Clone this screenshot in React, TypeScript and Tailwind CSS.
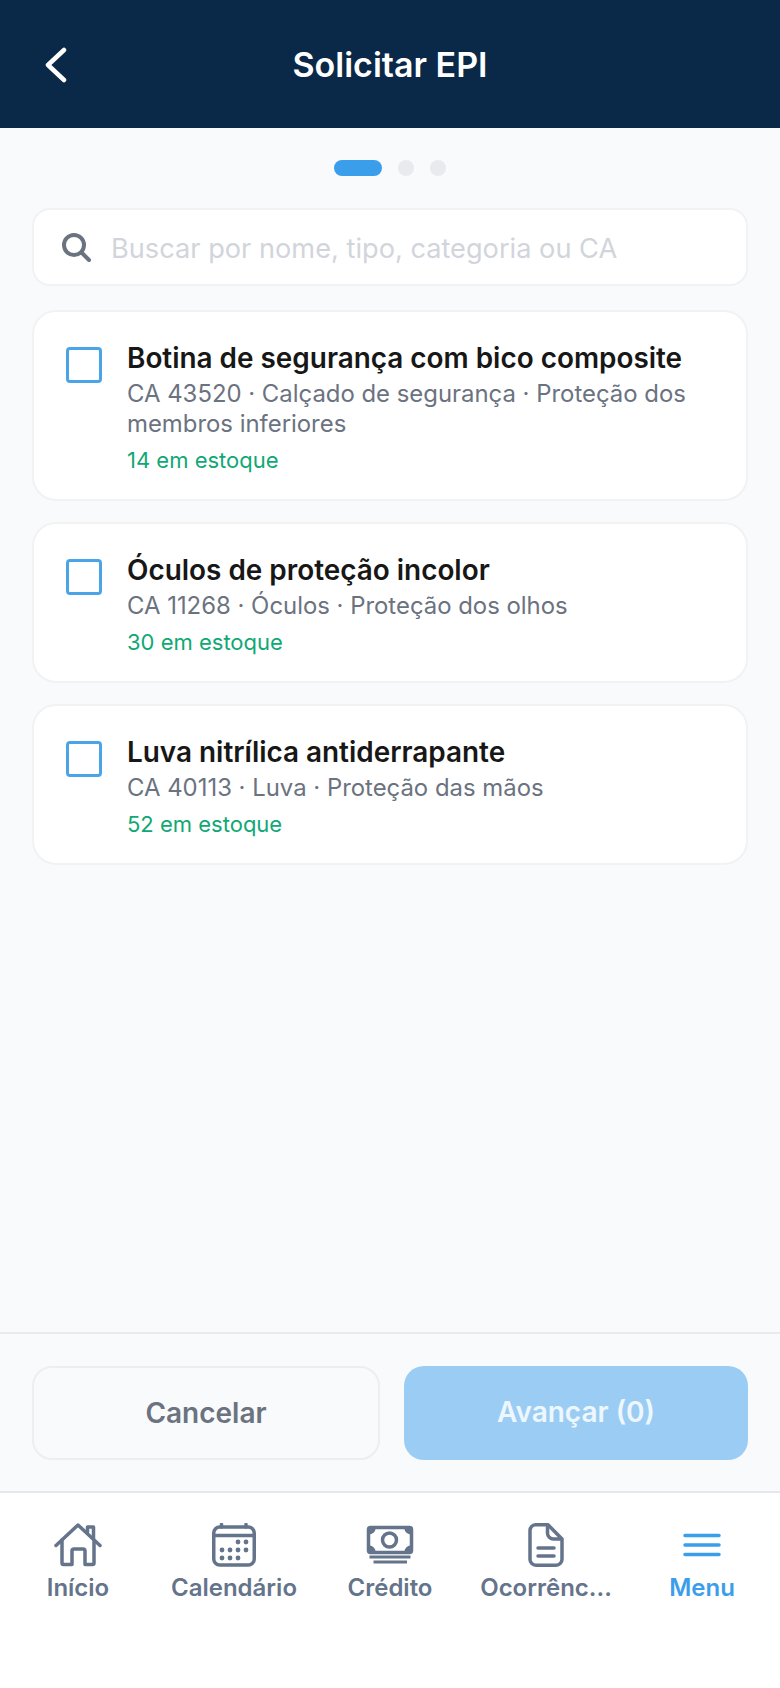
const items = [
  { name: 'Botina de segurança com bico composite', info: 'CA 43520 · Calçado de segurança · Proteção dos membros inferiores', stock: 14 },
  { name: 'Óculos de proteção incolor', info: 'CA 11268 · Óculos · Proteção dos olhos', stock: 30 },
  { name: 'Luva nitrílica antiderrapante', info: 'CA 40113 · Luva · Proteção das mãos', stock: 52 },
]

function HomeIcon() {
  return (
    <svg width="48" height="44" viewBox="0 0 48 44" fill="none" stroke="#64748b" strokeWidth="3.5" strokeLinecap="round" strokeLinejoin="round">
      <path d="M2 22.5 L24 2 L46 22.5" />
      <path d="M33.5 9 V4 H39.5 V15" />
      <path d="M8 17 V40 Q8 41.5 9.5 41.5 H18 V28 Q18 26 20 26 H29 Q31 26 31 28 V41.5 H38.5 Q40 41.5 40 40 V17" />
    </svg>
  )
}

function CalendarIcon() {
  return (
    <svg width="44" height="44" viewBox="0 0 44 44" fill="none" stroke="#64748b" strokeWidth="3.5" strokeLinecap="round">
      <rect x="1.75" y="4" width="40.5" height="38" rx="6" />
      <path d="M2 12.5 H42" />
      <path d="M9.5 1.5 V4 M34 1.5 V4" />
      <g fill="#64748b" stroke="none">
        <circle cx="26" cy="19" r="2.4" />
        <circle cx="34" cy="19" r="2.4" />
        <circle cx="10" cy="27" r="2.4" />
        <circle cx="18" cy="27" r="2.4" />
        <circle cx="26" cy="27" r="2.4" />
        <circle cx="34" cy="27" r="2.4" />
        <circle cx="10" cy="35" r="2.4" />
        <circle cx="18" cy="35" r="2.4" />
        <circle cx="26" cy="35" r="2.4" />
      </g>
    </svg>
  )
}

function MoneyIcon() {
  return (
    <svg width="48" height="40" viewBox="0 0 48 40" fill="none" stroke="#64748b" strokeWidth="3.5" strokeLinejoin="round">
      <rect x="2.5" y="2.5" width="43" height="25" rx="2" />
      <circle cx="23.5" cy="15" r="7" />
      <g fill="#64748b" strokeWidth="1.5">
        <path d="M3 3 H9 Q8.5 8 3 9 Z" />
        <path d="M45 3 H39 Q39.5 8 45 9 Z" />
        <path d="M3 27 H9 Q8.5 22 3 21 Z" />
        <path d="M45 27 H39 Q39.5 22 45 21 Z" />
      </g>
      <path d="M3.5 32 H44.5 M7.5 37 H41" strokeWidth="3" />
    </svg>
  )
}

function DocIcon() {
  return (
    <svg width="36" height="44" viewBox="0 0 36 44" fill="none" stroke="#64748b" strokeWidth="3.5" strokeLinecap="round" strokeLinejoin="round">
      <path d="M7.5 1.75 H20 L34 16 V36 A6 6 0 0 1 28 42.25 H8 A6 6 0 0 1 2 36 V7.5 A6 6 0 0 1 7.5 1.75 Z" />
      <path d="M19.5 2 V10 A6 6 0 0 0 25.5 16 H33.5" />
      <path d="M10 25 H26 M10 33 H26" />
    </svg>
  )
}

function MenuIcon() {
  return (
    <svg width="38" height="24" viewBox="0 0 38 24" fill="none" stroke="#3b9eea" strokeWidth="3.5" strokeLinecap="round">
      <path d="M2 2.5 H36 M2 12 H36 M2 21.5 H36" />
    </svg>
  )
}

const tabs = [
  { label: 'Início', icon: <HomeIcon /> },
  { label: 'Calendário', icon: <CalendarIcon /> },
  { label: 'Crédito', icon: <MoneyIcon /> },
  { label: 'Ocorrênc...', icon: <DocIcon /> },
  { label: 'Menu', icon: <MenuIcon />, active: true },
]

export default function App() {
  return (
    <div className="flex h-[1688px] w-[780px] flex-col overflow-hidden bg-[#f8fafc] font-['Inter',sans-serif]">
      {/* Header */}
      <header className="relative flex h-[128px] shrink-0 items-center justify-center bg-[#0a2847] pt-[2px]">
        <svg className="absolute left-[44px] top-[47px]" width="24" height="36" viewBox="0 0 24 36" fill="none" stroke="white" strokeWidth="4.5" strokeLinecap="round" strokeLinejoin="round">
          <path d="M20 3 L4 18 L20 33" />
        </svg>
        <h1 className="text-[34px] font-semibold leading-[40px] text-white">Solicitar EPI</h1>
      </header>

      {/* Steps */}
      <div className="mb-[32px] mt-[32px] flex h-[16px] shrink-0 items-center justify-center gap-[16px]">
        <div className="h-[16px] w-[48px] rounded-full bg-[#3b9eea]" />
        <div className="h-[16px] w-[16px] rounded-full bg-[#e8eaed]" />
        <div className="h-[16px] w-[16px] rounded-full bg-[#e8eaed]" />
      </div>

      <main className="flex flex-1 flex-col gap-[24px] px-[32px]">
        {/* Search */}
        <div className="flex h-[78px] items-center gap-[20px] rounded-[18px] border-2 border-[#f1f2f4] bg-white pl-[27px]">
          <svg width="30" height="30" viewBox="0 0 30 30" fill="none" stroke="#6b7280" strokeWidth="4" strokeLinecap="round">
            <circle cx="13" cy="13" r="10" />
            <path d="M21 21 L28 28" />
          </svg>
          <span className="pt-[3px] text-[27.2px] leading-[34px] text-[#d1d5db]">Buscar por nome, tipo, categoria ou CA</span>
        </div>

        {/* Items */}
        <div className="flex flex-col gap-[21px]">
          {items.map((item) => (
            <div key={item.name} className="flex items-start gap-[25px] rounded-[24px] border-2 border-[#f1f2f4] bg-white pb-[24px] pl-[32px] pr-[27px] pt-[25px]">
              <div className="mt-[10px] h-[36px] w-[36px] shrink-0 rounded-[4px] border-[3px] border-[#4ba3e8]" />
              <div className="min-w-0">
                <div className="text-[27.9px] font-semibold leading-[42px] text-[#171717]">{item.name}</div>
                <div className="text-[23.9px] leading-[30px] text-[#6b7280]">{item.info}</div>
                <div className="mt-[6px] text-[22px] leading-[30px] text-[#10a874]">{item.stock} em estoque</div>
              </div>
            </div>
          ))}
        </div>
      </main>

      {/* Actions */}
      <div className="flex h-[161px] shrink-0 items-start gap-[24px] border-b-2 border-t-2 border-b-[#e5e7eb] border-t-[#e8eaed] px-[32px] pt-[32px]">
        <button className="flex h-[94px] w-[348px] items-center justify-center rounded-[20px] border-2 border-[#eceef1] text-[28px] font-semibold text-[#6b7280]">Cancelar</button>
        <button className="flex h-[94px] flex-1 items-center justify-center rounded-[20px] bg-[#9bcdf4] pb-[2px] text-[28px] font-semibold text-[#eef7fe]">Avançar (0)</button>
      </div>

      {/* Bottom tabs */}
      <nav className="flex h-[195px] shrink-0 items-start bg-white pt-[30px]">
        {tabs.map((tab) => (
          <div key={tab.label} className="flex flex-1 flex-col items-center">
            <div className="flex h-[44px] items-center justify-center">{tab.icon}</div>
            <span className={`mt-[5px] whitespace-nowrap text-[24px] font-semibold leading-[32px] ${tab.active ? 'text-[#3b9eea]' : 'text-[#64748b]'}`}>{tab.label}</span>
          </div>
        ))}
      </nav>
    </div>
  )
}
